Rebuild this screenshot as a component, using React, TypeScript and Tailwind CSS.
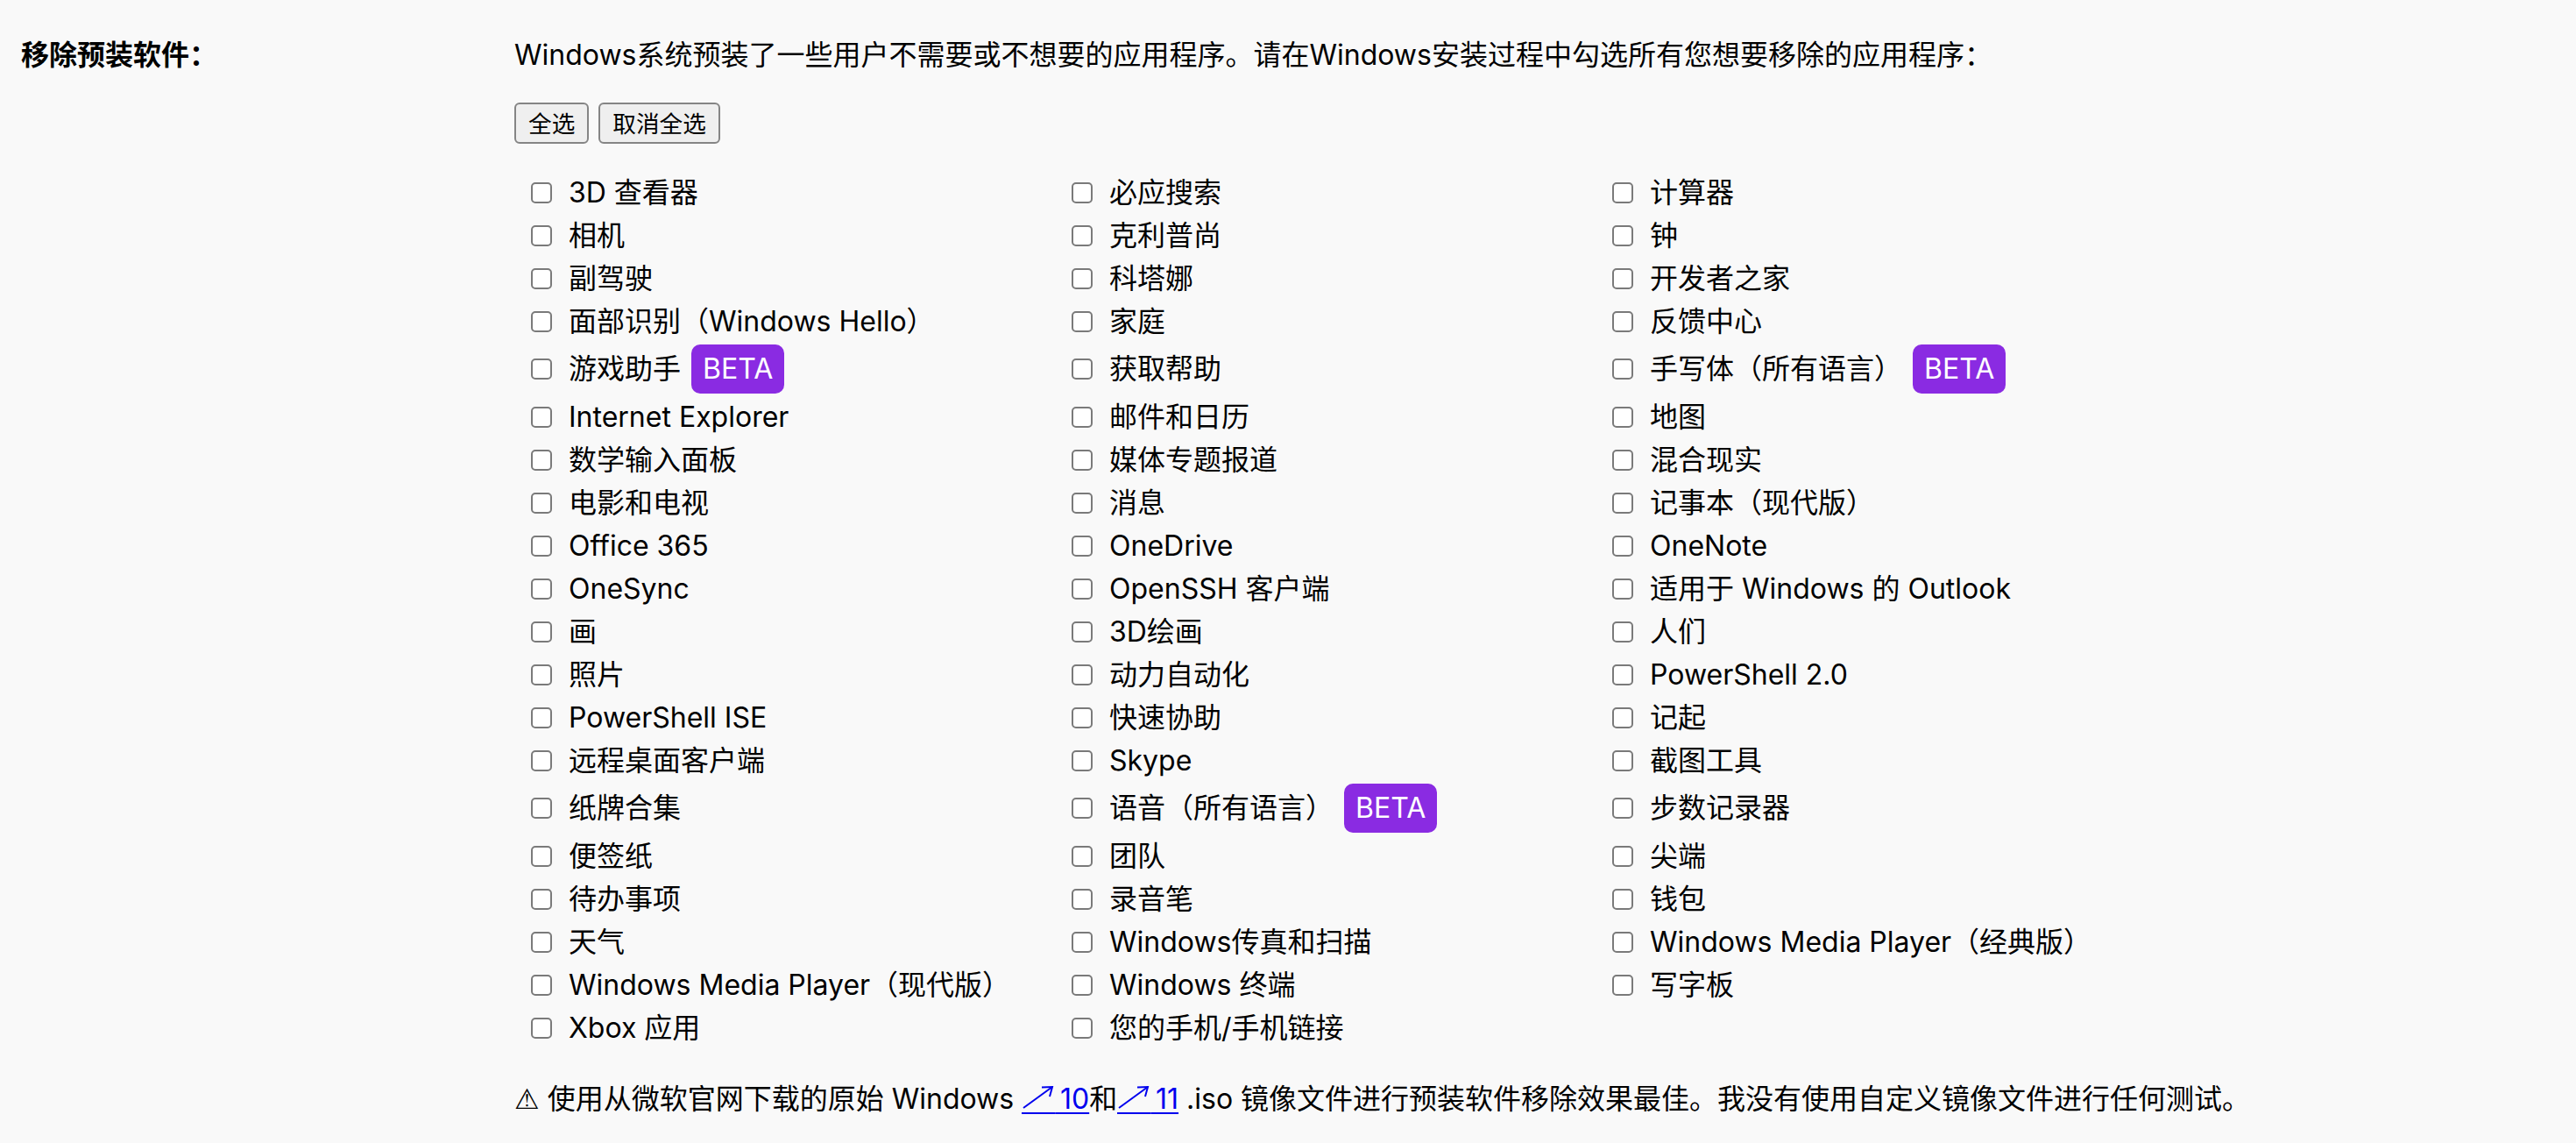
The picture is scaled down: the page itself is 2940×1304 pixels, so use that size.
import { useState } from 'react'

type App = { name: string; beta?: boolean }

// row-major order, three per row
const apps: App[] = [
  { name: '3D 查看器' }, { name: '必应搜索' }, { name: '计算器' },
  { name: '相机' }, { name: '克利普尚' }, { name: '钟' },
  { name: '副驾驶' }, { name: '科塔娜' }, { name: '开发者之家' },
  { name: '面部识别（Windows Hello）' }, { name: '家庭' }, { name: '反馈中心' },
  { name: '游戏助手', beta: true }, { name: '获取帮助' }, { name: '手写体（所有语言）', beta: true },
  { name: 'Internet Explorer' }, { name: '邮件和日历' }, { name: '地图' },
  { name: '数学输入面板' }, { name: '媒体专题报道' }, { name: '混合现实' },
  { name: '电影和电视' }, { name: '消息' }, { name: '记事本（现代版）' },
  { name: 'Office 365' }, { name: 'OneDrive' }, { name: 'OneNote' },
  { name: 'OneSync' }, { name: 'OpenSSH 客户端' }, { name: '适用于 Windows 的 Outlook' },
  { name: '画' }, { name: '3D绘画' }, { name: '人们' },
  { name: '照片' }, { name: '动力自动化' }, { name: 'PowerShell 2.0' },
  { name: 'PowerShell ISE' }, { name: '快速协助' }, { name: '记起' },
  { name: '远程桌面客户端' }, { name: 'Skype' }, { name: '截图工具' },
  { name: '纸牌合集' }, { name: '语音（所有语言）', beta: true }, { name: '步数记录器' },
  { name: '便签纸' }, { name: '团队' }, { name: '尖端' },
  { name: '待办事项' }, { name: '录音笔' }, { name: '钱包' },
  { name: '天气' }, { name: 'Windows传真和扫描' }, { name: 'Windows Media Player（经典版）' },
  { name: 'Windows Media Player（现代版）' }, { name: 'Windows 终端' }, { name: '写字板' },
  { name: 'Xbox 应用' }, { name: '您的手机/手机链接' },
]

// external-link arrow; the svg carries its own piece of the link underline
function ExternalArrow() {
  return (
    <svg width="38" height="36" viewBox="0 0 38 36" fill="none" className="inline align-[-9px]">
      <g stroke="currentColor" strokeWidth="2">
        <path d="M2 26 L35 2" />
        <path d="M23 2.5 L35 2 L32 13" />
      </g>
      <rect x="0" y="31" width="38" height="2" fill="currentColor" />
    </svg>
  )
}

export default function App() {
  const [checked, setChecked] = useState<boolean[]>(() => apps.map(() => false))

  const toggle = (i: number) =>
    setChecked((prev) => prev.map((v, j) => (j === i ? !v : v)))

  return (
    <div className="min-h-screen bg-[#f9f9f9] text-black text-[32px] font-['Inter','Noto_Sans_CJK_SC',sans-serif]">
      <div className="flex pt-[38px] pl-[24px]">
        <div className="w-[563px] shrink-0 h-[49px] leading-[49px] font-bold">移除预装软件：</div>

        <div className="flex-1">
          <p className="h-[49px] leading-[49px] whitespace-nowrap">
            Windows系统预装了一些用户不需要或不想要的应用程序。请在Windows安装过程中勾选所有您想要移除的应用程序：
          </p>

          {/* Select buttons */}
          <div className="mt-[30px] flex gap-[11px]">
            <button
              onClick={() => setChecked(apps.map(() => true))}
              className="h-[47px] px-[14px] text-[26.67px] bg-[#efefef] border-2 border-[#858585] rounded-[6px]"
            >
              全选
            </button>
            <button
              onClick={() => setChecked(apps.map(() => false))}
              className="h-[47px] px-[14px] text-[26.67px] bg-[#efefef] border-2 border-[#858585] rounded-[6px]"
            >
              取消全选
            </button>
          </div>

          {/* App list */}
          <div className="mt-[31px] pl-[19px] grid grid-cols-[repeat(3,617px)]">
            {apps.map((app, i) => (
              <label key={app.name} className="flex items-center min-h-[49px] whitespace-nowrap cursor-pointer">
                <input
                  type="checkbox"
                  checked={checked[i]}
                  onChange={() => toggle(i)}
                  className="appearance-none shrink-0 w-[24px] h-[24px] mr-[19px] bg-white border-2 border-[#7a7a7a] rounded-[5px] checked:bg-[#0075ff] checked:border-[#0075ff]"
                />
                <span>{app.name}</span>
                {app.beta && (
                  <span className="ml-[12px] my-[2px] h-[56px] px-[13px] flex items-center rounded-[10px] bg-[#8a2be2] text-white">
                    BETA
                  </span>
                )}
              </label>
            ))}
          </div>

          <p className="mt-[32px] h-[49px] leading-[49px] whitespace-nowrap">
            <span className="font-['Liberation_Sans','DejaVu_Sans',sans-serif]">⚠</span> 使用从微软官网下载的原始 Windows{' '}
            <a href="#" className="text-[#0000ee] underline decoration-2 underline-offset-[4px]">
              <ExternalArrow />{'\u2009'}10
            </a>
            和
            <a href="#" className="text-[#0000ee] underline decoration-2 underline-offset-[4px]">
              <ExternalArrow />{'\u2009'}11
            </a>
            {' '}.iso 镜像文件进行预装软件移除效果最佳。我没有使用自定义镜像文件进行任何测试。
          </p>
        </div>
      </div>
    </div>
  )
}
